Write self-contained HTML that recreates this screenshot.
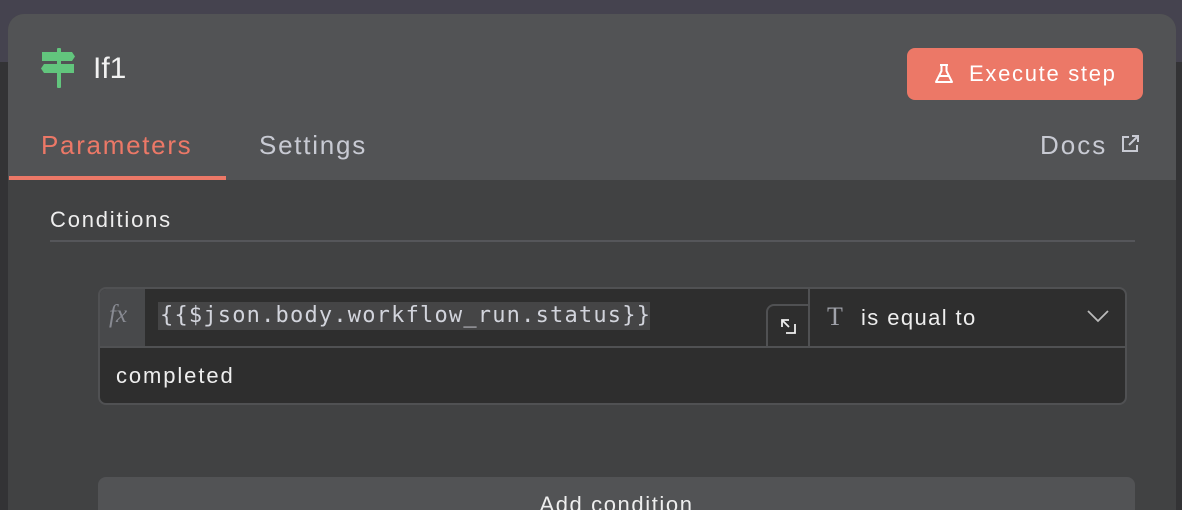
<!DOCTYPE html>
<html><head><style>
*{margin:0;padding:0;box-sizing:border-box}
html,body{width:1182px;height:510px;overflow:hidden}
body{background:#333335;font-family:"Liberation Sans",sans-serif;position:relative}
.top{position:absolute;left:0;top:0;width:1182px;height:62px;background:#45434f}
.panel{position:absolute;left:8px;top:14px;width:1168px;height:496px;background:#414243;border-radius:16px 16px 0 0;overflow:hidden}
.head{position:absolute;left:0;top:0;width:100%;height:166px;background:#525355}
.abs{position:absolute;white-space:nowrap}
</style></head><body>
<div class="top"></div>
<div class="panel">
 <div class="head">
  <svg class="abs" style="left:32px;top:34px" width="36" height="40" viewBox="0 0 36 40">
   <path d="M2 4h30l3 4.5-3 4.5H2z" fill="#62c57d"/>
   <path d="M34 16H4l-3 4.5 3 4.5h30z" fill="#62c57d"/>
   <rect x="17" y="0" width="4" height="40" rx="1" fill="#62c57d"/>
  </svg>
  <div class="abs" style="left:85px;top:38px;font-size:30px;color:#f2f2f2">If1</div>
  <div class="abs" style="left:899px;top:34px;width:236px;height:52px;background:#ec7867;border-radius:8px;color:#fff;font-size:22px;letter-spacing:1.7px;line-height:52px;padding-left:62px">Execute step</div>
  <svg class="abs" style="left:926px;top:49px" width="20" height="22" viewBox="0 0 20 22" fill="none" stroke="#fff" stroke-width="2" stroke-linejoin="round"><path d="M6 2h8M7.5 2v6L2 19h16L12.5 8V2M5 13h10"/></svg>
  <div class="abs" style="left:33px;top:116px;font-size:26px;letter-spacing:1.7px;color:#ec7867">Parameters</div>
  <div class="abs" style="left:1px;top:162px;width:217px;height:4px;background:#ec7867"></div>
  <div class="abs" style="left:251px;top:116px;font-size:26px;letter-spacing:1.75px;color:#c8cad3">Settings</div>
  <div class="abs" style="left:1032px;top:116px;font-size:26px;letter-spacing:2px;color:#c8cad3">Docs</div>
  <svg class="abs" style="left:1112px;top:120px" width="20" height="20" viewBox="0 0 20 20" fill="none" stroke="#c8cad3" stroke-width="2"><path d="M9 3H3v14h14v-6M12 2h6v6M18 2L9 11"/></svg>
 </div>
 <div class="abs" style="left:42px;top:193px;font-size:22px;letter-spacing:1.8px;color:#eee">Conditions</div>
 <div class="abs" style="left:42px;top:226px;width:1085px;height:2px;background:#55565a"></div>
 <div class="abs" style="left:90px;top:273px;width:1029px;height:118px;border:2px solid #505153;border-radius:8px;background:#2e2e2e;overflow:hidden">
  <div class="abs" style="left:0;top:0;width:45px;height:57px;background:#48494b;color:#888a92;font-family:'Liberation Serif',serif;font-style:italic;font-size:25px;padding:12px 0 0 9px">fx</div>
  <div class="abs" style="left:58px;top:13px;width:492px;height:28px;background:#454546;font-family:'DejaVu Sans Mono','Liberation Mono',monospace;font-size:22px;letter-spacing:1.2px;color:#d2d4dc;line-height:28px;padding-left:2px">{{$json.body.workflow_run.status}}</div>
  <div class="abs" style="left:666px;top:15px;width:44px;height:44px;border:2px solid #505153;border-radius:8px 0 0 0;background:#2e2e2e"></div>
  <svg class="abs" style="left:679px;top:28px" width="18" height="18" viewBox="0 0 18 18" fill="none" stroke="#eee" stroke-width="1.8"><path d="M3 10V3h7M3 3l7 7M7 16h9V7"/></svg>
  <div class="abs" style="left:708px;top:0;width:2px;height:57px;background:#505153"></div>
  <div class="abs" style="left:0;top:57px;width:100%;height:2px;background:#505153"></div>
  <div class="abs" style="left:727px;top:13px;font-family:'Liberation Serif',serif;font-size:26px;color:#a0a2aa">T</div>
  <div class="abs" style="left:761px;top:16px;font-size:22px;letter-spacing:1.4px;color:#eee">is equal to</div>
  <svg class="abs" style="left:986px;top:20px" width="24" height="14" viewBox="0 0 24 14" fill="none" stroke="#bbb" stroke-width="1.8"><path d="M2 2l10 10L22 2"/></svg>
  <div class="abs" style="left:16px;top:74px;font-size:22px;letter-spacing:1.9px;color:#eee">completed</div>
 </div>
 <div class="abs" style="left:90px;top:463px;width:1037px;height:33px;background:#525355;border-radius:8px 8px 0 0;text-align:center;font-size:22px;letter-spacing:1.6px;color:#eee;padding-top:15px;overflow:hidden">Add condition</div>
</div>
</body></html>
